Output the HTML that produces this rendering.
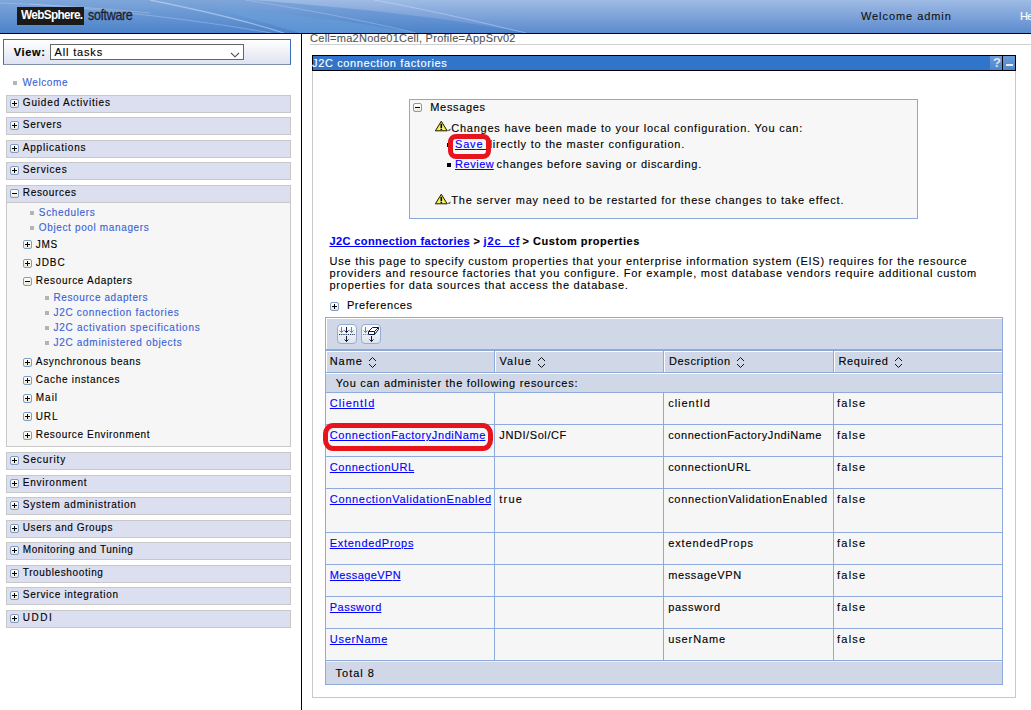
<!DOCTYPE html>
<html><head><meta charset="utf-8">
<style>
html,body{margin:0;padding:0;}
body{width:1031px;height:710px;overflow:hidden;position:relative;background:#fff;font-family:"Liberation Sans",sans-serif;font-size:11px;}
.a{position:absolute;box-sizing:border-box;}
.t{position:absolute;white-space:pre;font-size:11px;line-height:13px;font-family:"Liberation Sans",sans-serif;-webkit-text-stroke:0.12px currentColor;}
.nb{position:absolute;box-sizing:border-box;left:6px;width:285px;height:18px;border:1px solid #c8c8c8;background:#dcdff0;}
.pl{position:absolute;box-sizing:border-box;width:9px;height:9px;border:1px solid #7f9dc0;border-radius:2px;background:linear-gradient(#fff,#efe8d8);}
.pl:before{content:"";position:absolute;left:1px;top:3px;width:5px;height:1px;background:#000;}
.pl.p:after{content:"";position:absolute;left:3px;top:1px;width:1px;height:5px;background:#000;}
.bu{position:absolute;width:4px;height:4px;background:#b4b4b4;}
.cs{position:absolute;width:1px;background:#8eaadc;}
.rs{position:absolute;height:1px;background:#8eaadc;left:325px;width:677px;}
.so{position:absolute;width:9px;height:12px;}
</style></head><body>
<!-- header -->
<svg class="a" style="left:0;top:0" width="1031" height="33">
<defs>
<linearGradient id="g1" x1="0" y1="0" x2="0" y2="1"><stop offset="0" stop-color="#9ebbe4"/><stop offset="1" stop-color="#5c8bcf"/></linearGradient>
<linearGradient id="g2" x1="0" y1="0" x2="0" y2="1"><stop offset="0" stop-color="#7fa6da"/><stop offset="1" stop-color="#4c83ca"/></linearGradient>
<linearGradient id="g3" x1="0" y1="0" x2="0" y2="1"><stop offset="0" stop-color="#6f9ed8"/><stop offset="1" stop-color="#4a86cc"/></linearGradient>
</defs>
<rect x="0" y="0" width="1031" height="33" fill="url(#g1)"/>
<path d="M0,0 L250,0 C330,6 440,16 526,33 L0,33 Z" fill="url(#g2)"/>
<path d="M200,6 C280,12 360,22 416,33 L300,33 C260,22 230,12 200,6 Z" fill="#6aa2dc" fill-opacity="0.5"/>
<path d="M0,3 C60,5 110,9 150,13" stroke="#c8daf4" stroke-opacity="0.35" stroke-width="1.2" fill="none"/>
<path d="M150,0 C200,10 250,22 284,33" stroke="#d8e6f8" stroke-opacity="0.5" stroke-width="1.3" fill="none"/>
<path d="M30,4 C100,9 200,20 271,33" stroke="#c8daf4" stroke-opacity="0.35" stroke-width="1.1" fill="none"/>
<path d="M245,0 C310,10 370,22 416,33" stroke="#b8d0f0" stroke-opacity="0.4" stroke-width="1" fill="none"/>
<path d="M374,0 C420,8 480,22 526,33" stroke="#dce8f8" stroke-opacity="0.4" stroke-width="1" fill="none"/>
</svg>
<div class="a" style="left:0;top:33px;width:1031px;height:1px;background:#000;"></div>
<div class="a" style="left:17px;top:7px;width:67px;height:18px;background:#1a1a1a;"></div>
<div class="a" style="left:21px;top:6px;font:bold 13.5px/18px 'Liberation Sans',sans-serif;color:#fff;letter-spacing:-0.75px;transform:scaleX(0.875);transform-origin:0 0;white-space:pre;">WebSphere.</div>
<div class="a" style="left:88px;top:5.5px;font:14.5px/18px 'Liberation Sans',sans-serif;color:#1e2230;letter-spacing:-0.4px;transform:scaleX(0.86);transform-origin:0 0;white-space:pre;-webkit-text-stroke:0.3px #1e2230;">software</div>

<!-- sidebar -->
<div class="a" style="left:301px;top:34px;width:1px;height:676px;background:#000;"></div>
<div class="a" style="left:3px;top:39px;width:288px;height:26px;border:1px solid #3d6eb8;border-bottom-color:#7f8fa8;background:linear-gradient(#ffffff,#dfe3f0);"></div>
<div class="a" style="left:50px;top:44px;width:194px;height:16px;border:1px solid #666;background:#fff;"></div>
<svg class="a" style="left:230px;top:52px" width="11" height="7"><path d="M1,0.8 L5,4.8 L9,0.8" stroke="#444" stroke-width="1.1" fill="none"/></svg>
<div class="bu" style="left:13px;top:81px;"></div>

<div class="nb" style="top:95px"></div><div class="pl p" style="left:10px;top:99px"></div>
<div class="nb" style="top:117px"></div><div class="pl p" style="left:10px;top:121px"></div>
<div class="nb" style="top:140px"></div><div class="pl p" style="left:10px;top:144px"></div>
<div class="nb" style="top:162px"></div><div class="pl p" style="left:10px;top:166px"></div>
<div class="a" style="left:6px;top:185px;width:285px;height:262px;border:1px solid #c8c8c8;background:#f6f6f6;"></div>
<div class="a" style="left:7px;top:186px;width:283px;height:17px;background:#dcdff0;border-bottom:1px solid #c8c8c8;"></div>
<div class="pl" style="left:10px;top:189px"></div>
<div class="bu" style="left:30px;top:211px;"></div>
<div class="bu" style="left:30px;top:226px;"></div>
<div class="pl p" style="left:23px;top:240px"></div>
<div class="pl p" style="left:23px;top:259px"></div>
<div class="pl" style="left:23px;top:277px"></div>
<div class="bu" style="left:45px;top:296px;"></div>
<div class="bu" style="left:45px;top:311px;"></div>
<div class="bu" style="left:45px;top:326px;"></div>
<div class="bu" style="left:45px;top:341px;"></div>
<div class="pl p" style="left:23px;top:358px"></div>
<div class="pl p" style="left:23px;top:376px"></div>
<div class="pl p" style="left:23px;top:394px"></div>
<div class="pl p" style="left:23px;top:412px"></div>
<div class="pl p" style="left:23px;top:431px"></div>

<div class="nb" style="top:452px"></div><div class="pl p" style="left:10px;top:456px"></div>
<div class="nb" style="top:475px"></div><div class="pl p" style="left:10px;top:479px"></div>
<div class="nb" style="top:497px"></div><div class="pl p" style="left:10px;top:501px"></div>
<div class="nb" style="top:520px"></div><div class="pl p" style="left:10px;top:524px"></div>
<div class="nb" style="top:542px"></div><div class="pl p" style="left:10px;top:546px"></div>
<div class="nb" style="top:565px"></div><div class="pl p" style="left:10px;top:569px"></div>
<div class="nb" style="top:587px"></div><div class="pl p" style="left:10px;top:591px"></div>
<div class="nb" style="top:610px"></div><div class="pl p" style="left:10px;top:614px"></div>

<!-- main -->
<div class="a" style="left:310px;top:44px;width:721px;height:1px;background:#cfcfcf;"></div>
<div class="a" style="left:312px;top:55px;width:704px;height:643px;border:1px solid #c8c8c8;border-top:none;background:#fff;"></div>
<div class="a" style="left:312px;top:55px;width:704px;height:16px;border:1px solid #000;background:#3075c9;"></div>
<div class="a" style="left:990px;top:56px;width:12px;height:14px;background:linear-gradient(#6a9ad8,#4f86cc);"></div>
<div class="a" style="left:1002px;top:56px;width:1px;height:14px;background:#000;"></div>
<div class="a" style="left:1003px;top:56px;width:12px;height:14px;background:linear-gradient(#6a9ad8,#4f86cc);"></div>
<div class="a" style="left:993px;top:55px;font:bold 13px/16px 'Liberation Sans',sans-serif;color:#dfe8f4;">?</div>
<div class="a" style="left:1006px;top:64px;width:7px;height:2px;background:#e8eef8;"></div>

<div class="a" style="left:409px;top:99px;width:509px;height:120px;border:1px solid #8ca8d8;background:#f7f7f7;"></div>
<div class="pl" style="left:413px;top:103px"></div>
<svg class="a" style="left:434px;top:120px" width="18" height="13"><path d="M13,10.5 L17,8.6 L15.8,10.9 Z" fill="#555"/><path d="M7.3,1.2 L13.2,10.8 L1.4,10.8 Z" fill="#f0ec30" stroke="#1a1a00" stroke-width="1" stroke-linejoin="round"/><path d="M7.3,5 L10.6,9.8 L4,9.8 Z" fill="#fbfbe0" fill-opacity="0.6"/><rect x="6.5" y="3.8" width="1.6" height="4.2" fill="#000"/><rect x="6.5" y="8.7" width="1.6" height="1.3" fill="#000"/></svg>
<svg class="a" style="left:434px;top:193px" width="18" height="13"><path d="M13,10.5 L17,8.6 L15.8,10.9 Z" fill="#555"/><path d="M7.3,1.2 L13.2,10.8 L1.4,10.8 Z" fill="#f0ec30" stroke="#1a1a00" stroke-width="1" stroke-linejoin="round"/><path d="M7.3,5 L10.6,9.8 L4,9.8 Z" fill="#fbfbe0" fill-opacity="0.6"/><rect x="6.5" y="3.8" width="1.6" height="4.2" fill="#000"/><rect x="6.5" y="8.7" width="1.6" height="1.3" fill="#000"/></svg>
<div class="a" style="left:447px;top:143px;width:4px;height:4px;background:#000;"></div>
<div class="a" style="left:447px;top:163px;width:4px;height:4px;background:#000;"></div>

<div class="pl p" style="left:330px;top:302px"></div>

<!-- table -->
<div class="a" style="left:325px;top:317px;width:678px;height:368px;border:1px solid #8eaadc;background:#f6f6f6;"></div>
<div class="a" style="left:326px;top:318px;width:676px;height:31px;border-top:1px solid #fff;border-left:1px solid #fff;background:#d0d8e8;"></div>
<div class="a" style="left:325px;top:349px;width:678px;height:2px;background:#8eaadc;"></div>
<div class="a" style="left:326px;top:351px;width:676px;height:21px;border-top:1px solid #fff;background:#d0d8e8;"></div>
<div class="rs" style="top:372px"></div>
<div class="a" style="left:326px;top:373px;width:676px;height:19px;border-top:1px solid #fff;background:#d0d8e8;"></div>
<div class="rs" style="top:392px"></div>
<div class="rs" style="top:424px"></div>
<div class="rs" style="top:456px"></div>
<div class="rs" style="top:488px"></div>
<div class="rs" style="top:532px"></div>
<div class="rs" style="top:564px"></div>
<div class="rs" style="top:596px"></div>
<div class="rs" style="top:628px"></div>
<div class="rs" style="top:660px"></div>
<div class="a" style="left:326px;top:661px;width:676px;height:23px;background:#d0d8e8;border-top:1px solid #eef1f7;"></div>
<div class="cs" style="left:494px;top:351px;height:22px"></div>
<div class="cs" style="left:663px;top:351px;height:22px"></div>
<div class="cs" style="left:833px;top:351px;height:22px"></div>
<div class="a" style="left:495px;top:351px;width:1px;height:21px;background:#fff;"></div>
<div class="a" style="left:664px;top:351px;width:1px;height:21px;background:#fff;"></div>
<div class="a" style="left:834px;top:351px;width:1px;height:21px;background:#fff;"></div>
<div class="a" style="left:326px;top:351px;width:1px;height:21px;background:#fff;"></div>
<div class="cs" style="left:494px;top:392px;height:268px"></div>
<div class="cs" style="left:663px;top:392px;height:268px"></div>
<div class="cs" style="left:833px;top:392px;height:268px"></div>

<div class="a" style="left:337px;top:324px;width:20px;height:20px;border:1px solid #98acd0;border-radius:4px;background:linear-gradient(#fbfcfe,#dfe4ee);"></div>
<div class="a" style="left:361px;top:324px;width:20px;height:20px;border:1px solid #98acd0;border-radius:4px;background:linear-gradient(#fbfcfe,#dfe4ee);"></div>
<svg class="a" style="left:337px;top:324px" width="20" height="20">
<g stroke="#5f84b4" stroke-width="1" fill="none"><path d="M4.5,3 V8.5 M2.5,6.5 L4.5,8.5 L6.5,6.5"/><path d="M14.5,3 V8.5 M12.5,6.5 L14.5,8.5 L16.5,6.5"/></g>
<g stroke="#0c1838" stroke-width="1" fill="none"><path d="M9.5,3 V8.5 M7.5,6.5 L9.5,8.5 L11.5,6.5"/><path d="M9.5,12 V17.5 M7.5,15.5 L9.5,17.5 L11.5,15.5"/></g>
<path d="M2,10.5 H18" stroke="#1c2c50" stroke-width="1" stroke-dasharray="1.2,1"/>
</svg>
<svg class="a" style="left:361px;top:324px" width="20" height="20">
<g stroke="#5f84b4" stroke-width="1" fill="none"><path d="M4.5,3 V8.5 M2.5,6.5 L4.5,8.5 L6.5,6.5"/></g>
<path d="M2,10.5 H7" stroke="#5f84b4" stroke-width="1" stroke-dasharray="1.2,1"/>
<path d="M7.5,7.5 L11.5,3.5 H17.5 V5.5 L13.5,10.5 H7.5 Z" stroke="#0c1838" stroke-width="1" fill="#fff" stroke-linejoin="round"/>
<path d="M7.5,7.5 H13.5 L17.5,3.5 M13.5,7.5 V10.5" stroke="#0c1838" stroke-width="1" fill="none"/>
<g stroke="#0c1838" stroke-width="1" fill="none"><path d="M10.5,12 V17.5 M8.5,15.5 L10.5,17.5 L12.5,15.5"/></g>
</svg>
<svg class="so" style="left:368px;top:357px" viewBox="0 0 9 12"><path d="M1,4 L4.5,0.5 L8,4 M1,7 L4.5,10.5 L8,7" stroke="#111" stroke-width="1" fill="none"/></svg>
<svg class="so" style="left:537px;top:357px" viewBox="0 0 9 12"><path d="M1,4 L4.5,0.5 L8,4 M1,7 L4.5,10.5 L8,7" stroke="#111" stroke-width="1" fill="none"/></svg>
<svg class="so" style="left:736px;top:357px" viewBox="0 0 9 12"><path d="M1,4 L4.5,0.5 L8,4 M1,7 L4.5,10.5 L8,7" stroke="#111" stroke-width="1" fill="none"/></svg>
<svg class="so" style="left:894px;top:357px" viewBox="0 0 9 12"><path d="M1,4 L4.5,0.5 L8,4 M1,7 L4.5,10.5 L8,7" stroke="#111" stroke-width="1" fill="none"/></svg>

<span class="t" style="left:860.9px;top:10px;color:#111;letter-spacing:0.944px;">Welcome admin</span>
<span class="t" style="left:1020.1px;top:10px;color:#fff;letter-spacing:-0.742px;">Help</span>
<span class="t" style="left:13.8px;top:46px;color:#000;letter-spacing:0.642px;font-weight:bold;">View:</span>
<span class="t" style="left:54.6px;top:46px;color:#000;letter-spacing:0.829px;">All tasks</span>
<span class="t" style="left:22.5px;top:76px;color:#3a62d6;letter-spacing:0.583px;font-size:10px;">Welcome</span>
<span class="t" style="left:22.8px;top:96px;color:#000;letter-spacing:0.829px;font-size:10px;">Guided Activities</span>
<span class="t" style="left:22.8px;top:118px;color:#000;letter-spacing:0.724px;font-size:10px;">Servers</span>
<span class="t" style="left:22.8px;top:141px;color:#000;letter-spacing:0.798px;font-size:10px;">Applications</span>
<span class="t" style="left:22.8px;top:163px;color:#000;letter-spacing:0.792px;font-size:10px;">Services</span>
<span class="t" style="left:22.8px;top:186px;color:#000;letter-spacing:0.661px;font-size:10px;">Resources</span>
<span class="t" style="left:38.8px;top:206px;color:#3a62d6;letter-spacing:0.663px;font-size:10px;">Schedulers</span>
<span class="t" style="left:38.8px;top:221px;color:#3a62d6;letter-spacing:0.640px;font-size:10px;">Object pool managers</span>
<span class="t" style="left:35.8px;top:238px;color:#000;letter-spacing:0.650px;font-size:10px;">JMS</span>
<span class="t" style="left:35.8px;top:256px;color:#000;letter-spacing:0.925px;font-size:10px;">JDBC</span>
<span class="t" style="left:35.8px;top:274px;color:#000;letter-spacing:0.690px;font-size:10px;">Resource Adapters</span>
<span class="t" style="left:53.5px;top:291px;color:#3a62d6;letter-spacing:0.594px;font-size:10px;">Resource adapters</span>
<span class="t" style="left:53.5px;top:306px;color:#3a62d6;letter-spacing:0.682px;font-size:10px;">J2C connection factories</span>
<span class="t" style="left:53.5px;top:321px;color:#3a62d6;letter-spacing:0.735px;font-size:10px;">J2C activation specifications</span>
<span class="t" style="left:53.5px;top:336px;color:#3a62d6;letter-spacing:0.696px;font-size:10px;">J2C administered objects</span>
<span class="t" style="left:35.8px;top:355px;color:#000;letter-spacing:0.670px;font-size:10px;">Asynchronous beans</span>
<span class="t" style="left:35.8px;top:373px;color:#000;letter-spacing:0.704px;font-size:10px;">Cache instances</span>
<span class="t" style="left:35.8px;top:391px;color:#000;letter-spacing:0.985px;font-size:10px;">Mail</span>
<span class="t" style="left:35.8px;top:410px;color:#000;letter-spacing:0.842px;font-size:10px;">URL</span>
<span class="t" style="left:35.8px;top:428px;color:#000;letter-spacing:0.636px;font-size:10px;">Resource Environment</span>
<span class="t" style="left:22.8px;top:453px;color:#000;letter-spacing:0.911px;font-size:10px;">Security</span>
<span class="t" style="left:22.8px;top:476px;color:#000;letter-spacing:0.756px;font-size:10px;">Environment</span>
<span class="t" style="left:22.8px;top:498px;color:#000;letter-spacing:0.736px;font-size:10px;">System administration</span>
<span class="t" style="left:22.8px;top:521px;color:#000;letter-spacing:0.570px;font-size:10px;">Users and Groups</span>
<span class="t" style="left:22.8px;top:543px;color:#000;letter-spacing:0.557px;font-size:10px;">Monitoring and Tuning</span>
<span class="t" style="left:22.8px;top:566px;color:#000;letter-spacing:0.625px;font-size:10px;">Troubleshooting</span>
<span class="t" style="left:22.8px;top:588px;color:#000;letter-spacing:0.687px;font-size:10px;">Service integration</span>
<span class="t" style="left:22.8px;top:611px;color:#000;letter-spacing:1.516px;font-size:10px;">UDDI</span>
<span class="t" style="left:310.1px;top:32px;color:#555;letter-spacing:0.258px;">Cell=ma2Node01Cell, Profile=AppSrv02</span>
<span class="t" style="left:312.1px;top:57px;color:#fff;letter-spacing:0.619px;">J2C connection factories</span>
<span class="t" style="left:430.3px;top:101px;color:#000;letter-spacing:0.651px;">Messages</span>
<span class="t" style="left:451.2px;top:122px;color:#000;letter-spacing:0.768px;">Changes have been made to your local configuration. You can:</span>
<span class="t" style="left:455.0px;top:138px;color:#0000ff;letter-spacing:0.807px;text-decoration:underline;">Sav<span style="letter-spacing:0">e</span></span>
<span class="t" style="left:486.0px;top:138px;color:#000;letter-spacing:0.753px;">directly to the master configuration.</span>
<span class="t" style="left:455.0px;top:158px;color:#0000ff;letter-spacing:0.544px;text-decoration:underline;">Revie<span style="letter-spacing:0">w</span></span>
<span class="t" style="left:496.6px;top:158px;color:#000;letter-spacing:0.709px;">changes before saving or discarding.</span>
<span class="t" style="left:451.2px;top:194px;color:#000;letter-spacing:0.808px;">The server may need to be restarted for these changes to take effect.</span>
<span class="t" style="left:329.4px;top:235px;color:#0000ff;letter-spacing:0.407px;font-weight:bold;text-decoration:underline;">J2C connection factorie<span style="letter-spacing:0">s</span></span>
<span class="t" style="left:473.5px;top:235px;color:#000;letter-spacing:0.562px;font-weight:bold;">&gt;</span>
<span class="t" style="left:483.4px;top:235px;color:#0000ff;letter-spacing:0.959px;font-weight:bold;text-decoration:underline;">j2c_c<span style="letter-spacing:0">f</span></span>
<span class="t" style="left:522.5px;top:235px;color:#000;letter-spacing:0.534px;font-weight:bold;">&gt; Custom properties</span>
<span class="t" style="left:329.5px;top:255px;color:#000;letter-spacing:0.759px;">Use this page to specify custom properties that your enterprise information system (EIS) requires for the resource</span>
<span class="t" style="left:329.5px;top:267px;color:#000;letter-spacing:0.763px;">providers and resource factories that you configure. For example, most database vendors require additional custom</span>
<span class="t" style="left:329.5px;top:279px;color:#000;letter-spacing:0.753px;">properties for data sources that access the database.</span>
<span class="t" style="left:346.9px;top:299px;color:#000;letter-spacing:0.569px;">Preferences</span>
<span class="t" style="left:329.7px;top:355px;color:#000;letter-spacing:0.952px;">Name</span>
<span class="t" style="left:499.4px;top:355px;color:#000;letter-spacing:1.068px;">Value</span>
<span class="t" style="left:669.0px;top:355px;color:#000;letter-spacing:0.607px;">Description</span>
<span class="t" style="left:838.4px;top:355px;color:#000;letter-spacing:0.694px;">Required</span>
<span class="t" style="left:335.8px;top:377px;color:#000;letter-spacing:0.712px;">You can administer the following resources:</span>
<span class="t" style="left:329.8px;top:397px;color:#0000ff;letter-spacing:1.029px;text-decoration:underline;">ClientI<span style="letter-spacing:0">d</span></span>
<span class="t" style="left:668.2px;top:397px;color:#000;letter-spacing:0.977px;">clientId</span>
<span class="t" style="left:837.1px;top:397px;color:#000;letter-spacing:1.188px;">false</span>
<span class="t" style="left:329.8px;top:429px;color:#0000ff;letter-spacing:0.573px;text-decoration:underline;">ConnectionFactoryJndiNam<span style="letter-spacing:0">e</span></span>
<span class="t" style="left:499.3px;top:429px;color:#000;letter-spacing:0.587px;">JNDI/Sol/CF</span>
<span class="t" style="left:668.2px;top:429px;color:#000;letter-spacing:0.575px;">connectionFactoryJndiName</span>
<span class="t" style="left:837.1px;top:429px;color:#000;letter-spacing:1.188px;">false</span>
<span class="t" style="left:329.8px;top:461px;color:#0000ff;letter-spacing:0.562px;text-decoration:underline;">ConnectionUR<span style="letter-spacing:0">L</span></span>
<span class="t" style="left:668.2px;top:461px;color:#000;letter-spacing:0.598px;">connectionURL</span>
<span class="t" style="left:837.1px;top:461px;color:#000;letter-spacing:1.188px;">false</span>
<span class="t" style="left:329.8px;top:493px;color:#0000ff;letter-spacing:0.684px;text-decoration:underline;">ConnectionValidationEnable<span style="letter-spacing:0">d</span></span>
<span class="t" style="left:499.3px;top:493px;color:#000;letter-spacing:1.244px;">true</span>
<span class="t" style="left:668.2px;top:493px;color:#000;letter-spacing:0.685px;">connectionValidationEnabled</span>
<span class="t" style="left:837.1px;top:493px;color:#000;letter-spacing:1.188px;">false</span>
<span class="t" style="left:329.8px;top:537px;color:#0000ff;letter-spacing:0.698px;text-decoration:underline;">ExtendedProp<span style="letter-spacing:0">s</span></span>
<span class="t" style="left:668.2px;top:537px;color:#000;letter-spacing:0.892px;">extendedProps</span>
<span class="t" style="left:837.1px;top:537px;color:#000;letter-spacing:1.188px;">false</span>
<span class="t" style="left:329.8px;top:569px;color:#0000ff;letter-spacing:0.393px;text-decoration:underline;">MessageVP<span style="letter-spacing:0">N</span></span>
<span class="t" style="left:668.2px;top:569px;color:#000;letter-spacing:0.626px;">messageVPN</span>
<span class="t" style="left:837.1px;top:569px;color:#000;letter-spacing:1.188px;">false</span>
<span class="t" style="left:329.8px;top:601px;color:#0000ff;letter-spacing:0.458px;text-decoration:underline;">Passwor<span style="letter-spacing:0">d</span></span>
<span class="t" style="left:668.2px;top:601px;color:#000;letter-spacing:0.703px;">password</span>
<span class="t" style="left:837.1px;top:601px;color:#000;letter-spacing:1.188px;">false</span>
<span class="t" style="left:329.8px;top:633px;color:#0000ff;letter-spacing:0.703px;text-decoration:underline;">UserNam<span style="letter-spacing:0">e</span></span>
<span class="t" style="left:668.2px;top:633px;color:#000;letter-spacing:0.893px;">userName</span>
<span class="t" style="left:837.1px;top:633px;color:#000;letter-spacing:1.188px;">false</span>
<span class="t" style="left:335.5px;top:667px;color:#000;letter-spacing:1.013px;">Total 8</span>

<div class="a" style="left:482px;top:149px;width:4px;height:1px;background:#0000ff;"></div>
<!-- red annotations -->
<div class="a" style="left:448px;top:134px;width:43px;height:25px;border:5px solid #e8141c;border-radius:8px;"></div>
<div class="a" style="left:323px;top:423px;width:170px;height:28px;border:5px solid #e8141c;border-radius:10px/11px;"></div>
</body></html>
